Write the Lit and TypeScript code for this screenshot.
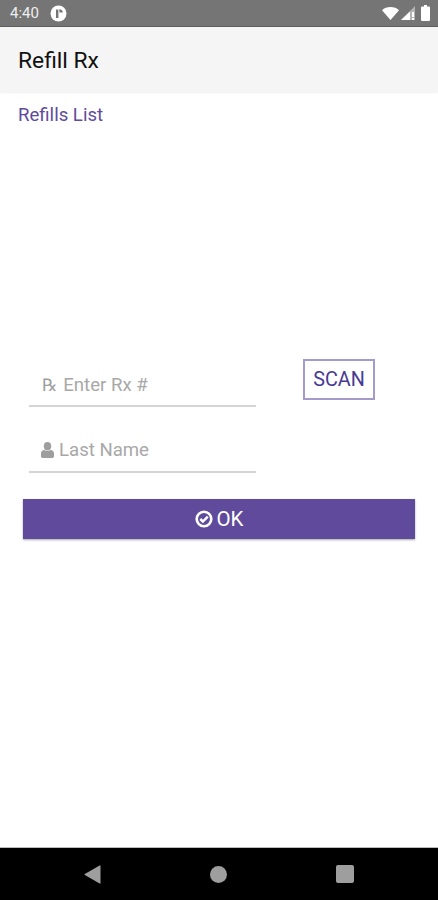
import { css, html, LitElement } from 'lit';
import { customElement } from 'lit/decorators.js';

@customElement('app-root')
export class AppRoot extends LitElement {
  render () {
    return html`
      <div class="status">
        <span class="time">4:40</span>
        <svg class="app-dot" width="17" height="17" viewBox="0 0 17 17">
          <circle cx="8.5" cy="8.5" r="8" fill="#fff"/>
          <path d="M6 4.5v8.5h2.4V4.5z" fill="#757575"/>
          <path d="M9.4 4.2c2 0 3.4 1.3 3.4 3.2H9.4z" fill="#757575"/>
        </svg>
        <span class="spacer"></span>
        <svg width="17" height="13" viewBox="0 0 17 13">
          <path d="M0 3.2C2.2 1.2 5.2 0 8.5 0S14.800 1.200 17 3.200L8.500 13z" fill="#fff"/>
        </svg>
        <svg class="signal" width="14" height="14" viewBox="0 0 14 14">
          <path d="M14 0v14H0z" fill="#fff" opacity="0.45"/>
          <path d="M9 5.500V14H0z" fill="#fff"/>
          <path d="M11 6h2v5h-2zM11 12h2v2h-2z" fill="#fff"/>
        </svg>
        <svg class="battery" width="9" height="16" viewBox="0 0 9 16">
          <path d="M3 0h3v1.500h2a1 1 0 0 1 1 1V15a1 1 0 0 1-1 1H1a1 1 0 0 1-1-1V2.500a1 1 0 0 1 1-1h2z" fill="#fff"/>
        </svg>
      </div>

      <header class="toolbar">Refill Rx</header>

      <main class="content">
        <a class="link">Refills List</a>

        <div class="form">
          <div class="top-row">
            <div class="field rx-field">
              <span class="rx-icon">℞</span>
              <span class="placeholder">Enter Rx #</span>
            </div>
            <button class="scan">SCAN</button>
          </div>
          <div class="field name-field">
            <svg width="13" height="16" viewBox="0 0 13 16">
              <ellipse cx="6.500" cy="4.200" rx="3.700" ry="4.200" fill="#9e9e9e"/>
              <path d="M0 14.300v-2.800C0 9.500 1.500 8 3.300 8c.9.700 2 1.100 3.200 1.100S8.800 8.700 9.700 8C11.500 8 13 9.500 13 11.500v2.800c0 1-.7 1.700-1.700 1.700H1.700C.7 16 0 15.300 0 14.300z" fill="#9e9e9e"/>
            </svg>
            <span class="placeholder">Last Name</span>
          </div>
          <button class="ok">
            <svg width="18" height="18" viewBox="0 0 18 18">
              <circle cx="9" cy="9" r="7.300" fill="none" stroke="#fff" stroke-width="2.600"/>
              <path d="M5.300 9l2.600 2.600 4.900-4.900" fill="none" stroke="#fff" stroke-width="2.500"/>
            </svg>
            <span>OK</span>
          </button>
        </div>
      </main>

      <nav class="nav">
        <svg width="17" height="19" viewBox="0 0 17 19">
          <path d="M16.500 1v17a.6.6 0 0 1-.9.500L.8 10a.6.6 0 0 1 0-1L15.600.5a.6.600 0 0 1 .9.500z" fill="#9e9e9e"/>
        </svg>
        <span class="home"></span>
        <span class="recent"></span>
      </nav>
    `;
  }

  static get styles () {
    return css`
      :host {
        display: flex;
        flex-direction: column;
        height: 900px;
        width: 438px;
        background: #fff;
        font-family: Roboto, "Liberation Sans", sans-serif;
        overflow: hidden;
      }

      .status {
        align-items: center;
        background: #757575;
        border-bottom: 1px solid #5f5f5f;
        box-sizing: border-box;
        color: #eee;
        display: flex;
        flex: 0 0 27px;
        font-size: 15px;
        padding: 0 8px 0 10px;
      }

      .time {
        margin-right: 11px;
      }

      .spacer {
        flex: 1;
      }

      .signal {
        margin-left: 2px;
      }

      .battery {
        margin-left: 6px;
      }

      .toolbar {
        align-items: center;
        background: #f5f5f5;
        box-shadow: 0 1px 2px rgba(0, 0, 0, 0.06);
        box-sizing: border-box;
        color: #111;
        display: flex;
        flex: 0 0 65px;
        font-size: 22.8px;
        padding: 2px 18px 0;
      }

      .content {
        display: flex;
        flex: 1;
        flex-direction: column;
      }

      .link {
        color: #5e4b9b;
        font-size: 18.6px;
        line-height: 24px;
        padding: 11px 18px 0;
      }

      .form {
        display: flex;
        flex-direction: column;
        padding: 232px 23px 0;
      }

      .top-row {
        align-items: flex-start;
        display: flex;
      }

      .field {
        align-items: center;
        border-bottom: 2px solid #d4d4d4;
        box-sizing: border-box;
        display: flex;
        margin-left: 6px;
        width: 227px;
      }

      .rx-field {
        gap: 6px;
        height: 48px;
        padding: 5px 0 0 13px;
      }

      .name-field {
        gap: 5px;
        height: 50px;
        margin-top: 16px;
        padding: 6px 0 0 12px;
      }

      .rx-icon {
        color: #9e9e9e;
        font-family: "DejaVu Sans", sans-serif;
        font-size: 17px;
      }

      .placeholder {
        color: #a8a8a8;
        font-size: 18.6px;
      }

      .scan {
        background: #fff;
        border: 2px solid #a59bcb;
        border-radius: 0;
        box-sizing: border-box;
        color: #483a94;
        font-family: inherit;
        font-size: 19.8px;
        height: 41px;
        margin-left: 47px;
        padding: 0;
        width: 72px;
      }

      .ok {
        align-items: center;
        background: #5f4a9b;
        border: 0;
        box-shadow: 0 1px 2px rgba(0, 0, 0, 0.35);
        color: #fff;
        display: flex;
        font-family: inherit;
        font-size: 20.5px;
        gap: 4px;
        height: 40px;
        justify-content: center;
        margin-top: 26px;
        padding: 0;
        width: 392px;
      }

      .nav {
        align-items: center;
        background: #000;
        border-top: 1px solid #bbb;
        box-sizing: border-box;
        display: flex;
        flex: 0 0 53px;
        padding: 0 84px;
        justify-content: space-between;
      }

      .home {
        background: #9e9e9e;
        border-radius: 50%;
        height: 17px;
        width: 17px;
      }

      .recent {
        background: #9e9e9e;
        border-radius: 2px;
        height: 18px;
        width: 18px;
      }
    `;
  }
}
